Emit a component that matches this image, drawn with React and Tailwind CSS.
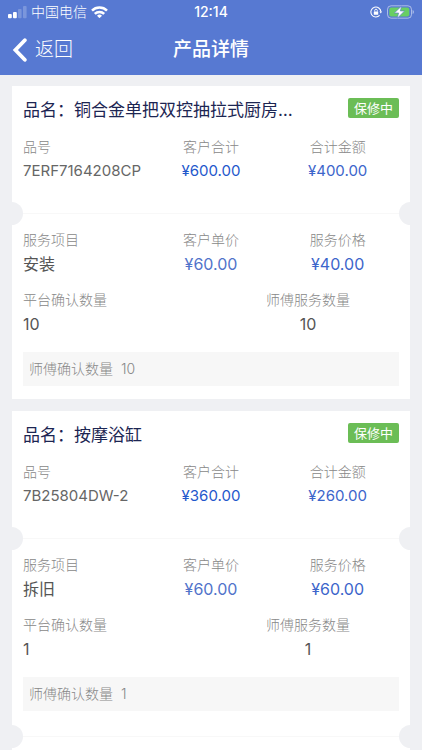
const products = [
  {
    name: '铜合金单把双控抽拉式厨房…',
    code: '7ERF7164208CP',
    customerTotal: '¥600.00',
    total: '¥400.00',
    service: '安装',
    customerPrice: '¥60.00',
    servicePrice: '¥40.00',
    quantity: 10,
  },
  {
    name: '按摩浴缸',
    code: '7B25804DW-2',
    customerTotal: '¥360.00',
    total: '¥260.00',
    service: '拆旧',
    customerPrice: '¥60.00',
    servicePrice: '¥60.00',
    quantity: 1,
    hasMore: true,
  },
];

const StatusBar = () => (
  <div className="grid h-6 grid-cols-3 items-center px-2">
    <div className="flex items-center gap-1">
      <svg width="19" height="13" viewBox="0 0 19 13" fill="#fff" aria-hidden="true">
        <rect x="0" y="8" width="3.8" height="4.2" rx="1" />
        <rect x="5" y="6" width="3.8" height="6.2" rx="1" />
        <rect x="10" y="3" width="3.6" height="9.2" rx="1" opacity="0.22" />
        <rect x="15" y="0" width="3.6" height="12.2" rx="1" opacity="0.22" />
      </svg>
      <span className="text-[14px] leading-none font-light whitespace-nowrap">中国电信</span>
      <svg width="17" height="12" viewBox="0 0 17 12" fill="none" stroke="#fff" strokeWidth="2.5" aria-hidden="true">
        <path d="M1 4.7a10.6 10.6 0 0 1 15 0" />
        <path d="M3.8 7.9a6.6 6.6 0 0 1 9.4 0" />
        <path d="M8.5 12.2 6 9.7a3.5 3.5 0 0 1 5 0Z" fill="#fff" stroke="none" />
      </svg>
    </div>
    <span className="text-center text-[14px] leading-none font-medium">12:14</span>
    <div className="flex items-center justify-end gap-1">
      <svg width="12" height="12" viewBox="0 0 12 12" fill="none" stroke="#fff" aria-hidden="true">
        <path d="M9.6 9.4a5 5 0 1 1 1.3-3.6" strokeWidth="1.1" />
        <path d="M9.4 5.4h2.6l-1.2 2Z" fill="#fff" stroke="none" />
        <rect x="3.8" y="5.4" width="4.4" height="3.4" rx="0.5" fill="#fff" stroke="none" />
        <path d="M4.7 5.6V4.5a1.3 1.3 0 0 1 2.6 0v1.1" strokeWidth="0.9" />
      </svg>
      <svg width="28" height="14" viewBox="0 0 28 14" aria-hidden="true">
        <rect x="1.5" y="0.8" width="24" height="12.4" rx="3.6" fill="none" stroke="#fff" strokeOpacity="0.5" />
        <rect x="3.3" y="2.6" width="20" height="8.8" rx="2" fill="#68cf63" />
        <path d="M26.6 5v4c.8-.3 1.3-1.1 1.3-2s-.5-1.7-1.3-2Z" fill="#fff" fillOpacity="0.5" />
        <path d="M15.6 1 8.4 8h4.2l-1.3 5.2 7.2-7.2h-4.2Z" fill="#fff" stroke="#5779d2" strokeWidth="0.6" />
      </svg>
    </div>
  </div>
);

const Header = () => (
  <header className="shrink-0 bg-[#5779d2] text-white">
    <StatusBar />
    <div className="grid h-[51px] grid-cols-3 items-center px-3">
      <button type="button" className="flex items-center gap-2 justify-self-start text-[19px] leading-none font-light">
        <svg width="15" height="24" viewBox="0 0 15 24" fill="none" stroke="#fff" strokeWidth="3.8" strokeLinecap="round" aria-hidden="true">
          <path d="M12.8 2.2 3.4 12l9.4 9.8" />
        </svg>
        返回
      </button>
      <h1 className="text-center text-[19px] leading-none font-medium whitespace-nowrap">产品详情</h1>
    </div>
  </header>
);

const Field = ({ label, value, className = '', valueClass = 'text-[16px] text-[#555]' }) => (
  <div className={className}>
    <dt className="text-[14px] leading-6 font-light text-[#888]">{label}</dt>
    <dd className={`leading-6 ${valueClass}`}>{value}</dd>
  </div>
);

// Ticket style divider with a notch cut into both card edges
const TicketDivider = () => (
  <div className="relative border-t border-[#f8f8f8]">
    <span className="absolute -top-3 -left-3 size-[23px] rounded-full bg-[#eff0f3]" />
    <span className="absolute -top-3 -right-3 size-[23px] rounded-full bg-[#eff0f3]" />
  </div>
);

const ProductCard = ({ product }) => (
  <article className="bg-white">
    <div className="px-[9px] pt-3 pb-[30px]">
      <div className="flex items-center justify-between gap-2 px-[2px]">
        <h2 className="truncate text-[17px] leading-6 text-[#1c2552]">品名：{product.name}</h2>
        <span className="mb-1 shrink-0 rounded-[2px] bg-[#6bbd56] px-[6px] text-[13px] leading-5 text-white">保修中</span>
      </div>
      <dl className="mt-[13px] grid grid-cols-3">
        <Field className="pl-[2px]" label="品号" value={product.code} valueClass="text-[15px] text-[#666]" />
        <Field className="text-center" label="客户合计" value={product.customerTotal} valueClass="text-[15px] text-[#1f58cc]" />
        <Field className="text-center" label="合计金额" value={product.total} valueClass="text-[15px] text-[#3c65cb]" />
      </dl>
    </div>

    <TicketDivider />

    <div className="px-[9px] pt-[14px] pb-[13px]">
      <dl className="grid grid-cols-3">
        <Field className="pl-[2px]" label="服务项目" value={product.service} />
        <Field className="text-center" label="客户单价" value={product.customerPrice} valueClass="text-[16px] text-[#5173ca]" />
        <Field className="text-center" label="服务价格" value={product.servicePrice} valueClass="text-[16px] text-[#3c65cb]" />
      </dl>
      <dl className="mt-3 grid grid-cols-2">
        <Field className="pl-[2px]" label="平台确认数量" value={product.quantity} />
        <Field className="pl-1 text-center" label="师傅服务数量" value={product.quantity} />
      </dl>
      <p className="mx-[2px] mt-4 flex gap-2 bg-[#f7f7f7] px-[6px] py-[5px] text-[14px] leading-6 font-light text-[#888]">
        <span>师傅确认数量</span>
        <span>{product.quantity}</span>
      </p>
    </div>

    {product.hasMore && (
      <div className="pt-3 pb-8">
        <TicketDivider />
      </div>
    )}
  </article>
);

const App = () => (
  <div className="flex h-screen flex-col bg-[#eff0f3] font-['Inter','Noto_Sans_CJK_SC',sans-serif]">
    <Header />
    <main className="flex flex-1 flex-col gap-3 overflow-y-auto px-3 pt-[11px] [scrollbar-width:none]">
      {products.map((product) => (
        <ProductCard key={product.code} product={product} />
      ))}
    </main>
  </div>
);

export default App;
